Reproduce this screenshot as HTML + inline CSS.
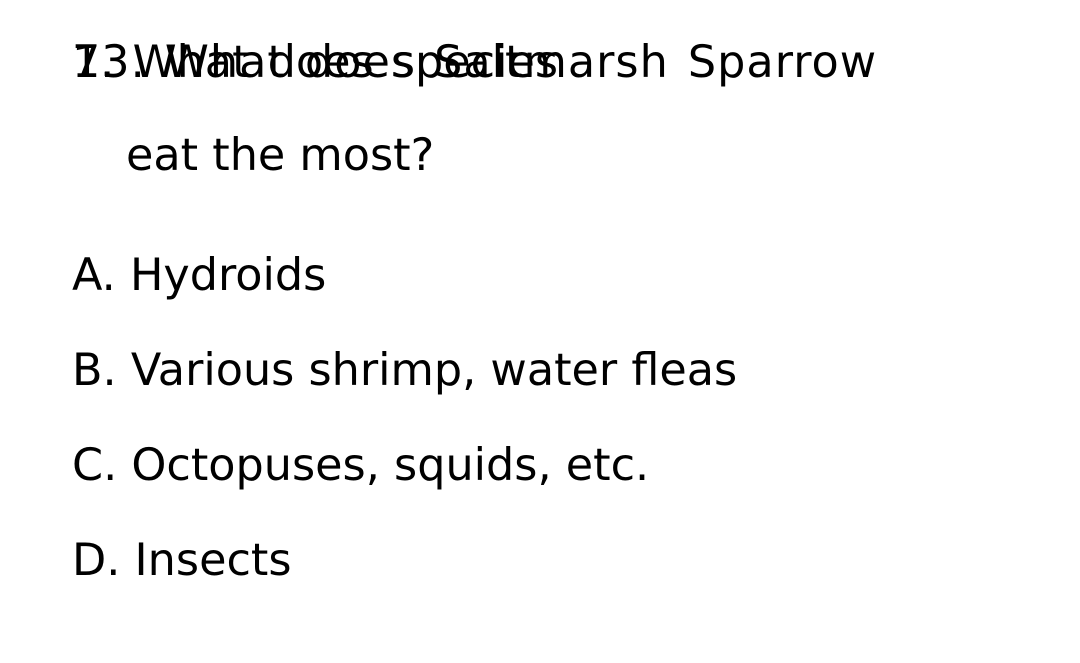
<!DOCTYPE html>
<html><head><style>
body{margin:0;width:1080px;height:663px;background:#fff;font-family:"DejaVu Sans","Liberation Sans",sans-serif;color:#000;position:relative;overflow:hidden}
.t{position:absolute;font-size:44.5px;white-space:nowrap;line-height:1}
</style></head><body>
<div class="t" style="left:72px;top:41px;word-spacing:4px">7. What does species</div>
<div class="t" style="left:72px;top:41px;letter-spacing:1px;word-spacing:4px">13. What does Saltmarsh Sparrow</div>
<div class="t" style="left:126px;top:134px">eat the most?</div>
<div class="t" style="left:72px;top:254px">A. Hydroids</div>
<div class="t" style="left:72px;top:349px">B. Various shrimp, water fleas</div>
<div class="t" style="left:72px;top:444px">C. Octopuses, squids, etc.</div>
<div class="t" style="left:72px;top:539px">D. Insects</div>
</body></html>
